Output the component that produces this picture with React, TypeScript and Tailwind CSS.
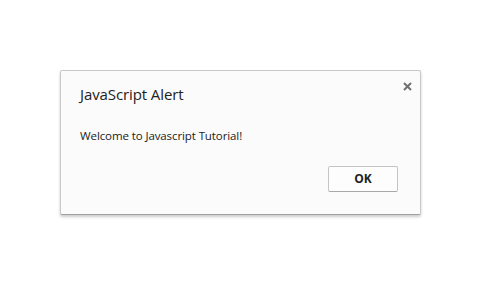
import React from 'react';

const App: React.FC = () => {
  return (
    <div className="w-[486px] h-[287px] bg-white pt-[70px] pl-[60px]" style={{ fontFamily: '"Open Sans", "Noto Sans", sans-serif' }}>
      <div className="relative w-[361px] h-[145px] bg-[#fbfbfb] border border-[#c8c8c8] border-b-[#a0a0a0] shadow-[0_2px_3px_rgba(0,0,0,0.2)] rounded-[2px] px-[19px] pt-[13px]">
        <button type="button" className="absolute top-[8px] right-[6px] w-[14px] h-[14px] flex items-center justify-center text-[#707070]">
          <svg width="9" height="9" viewBox="0 0 9 9">
            <path d="M1 1 L8 8 M8 1 L1 8" stroke="currentColor" strokeWidth="2" />
          </svg>
        </button>
        <h1 className="text-[15px] leading-[20px] text-[#222] tracking-[-0.1px]">JavaScript Alert</h1>
        <p className="mt-[24px] text-[11.5px] leading-[16px] text-[#222] tracking-[-0.1px]">Welcome to Javascript Tutorial!</p>
        <div className="flex justify-end mt-[22px] pr-[3px]">
          <button type="button" className="w-[70px] h-[26px] bg-[#fdfdfd] border border-[#c4c4c4] border-b-[#a8a8a8] rounded-[2px] text-[12px] font-bold text-[#222]">
            OK
          </button>
        </div>
      </div>
    </div>
  );
};

export default App;
